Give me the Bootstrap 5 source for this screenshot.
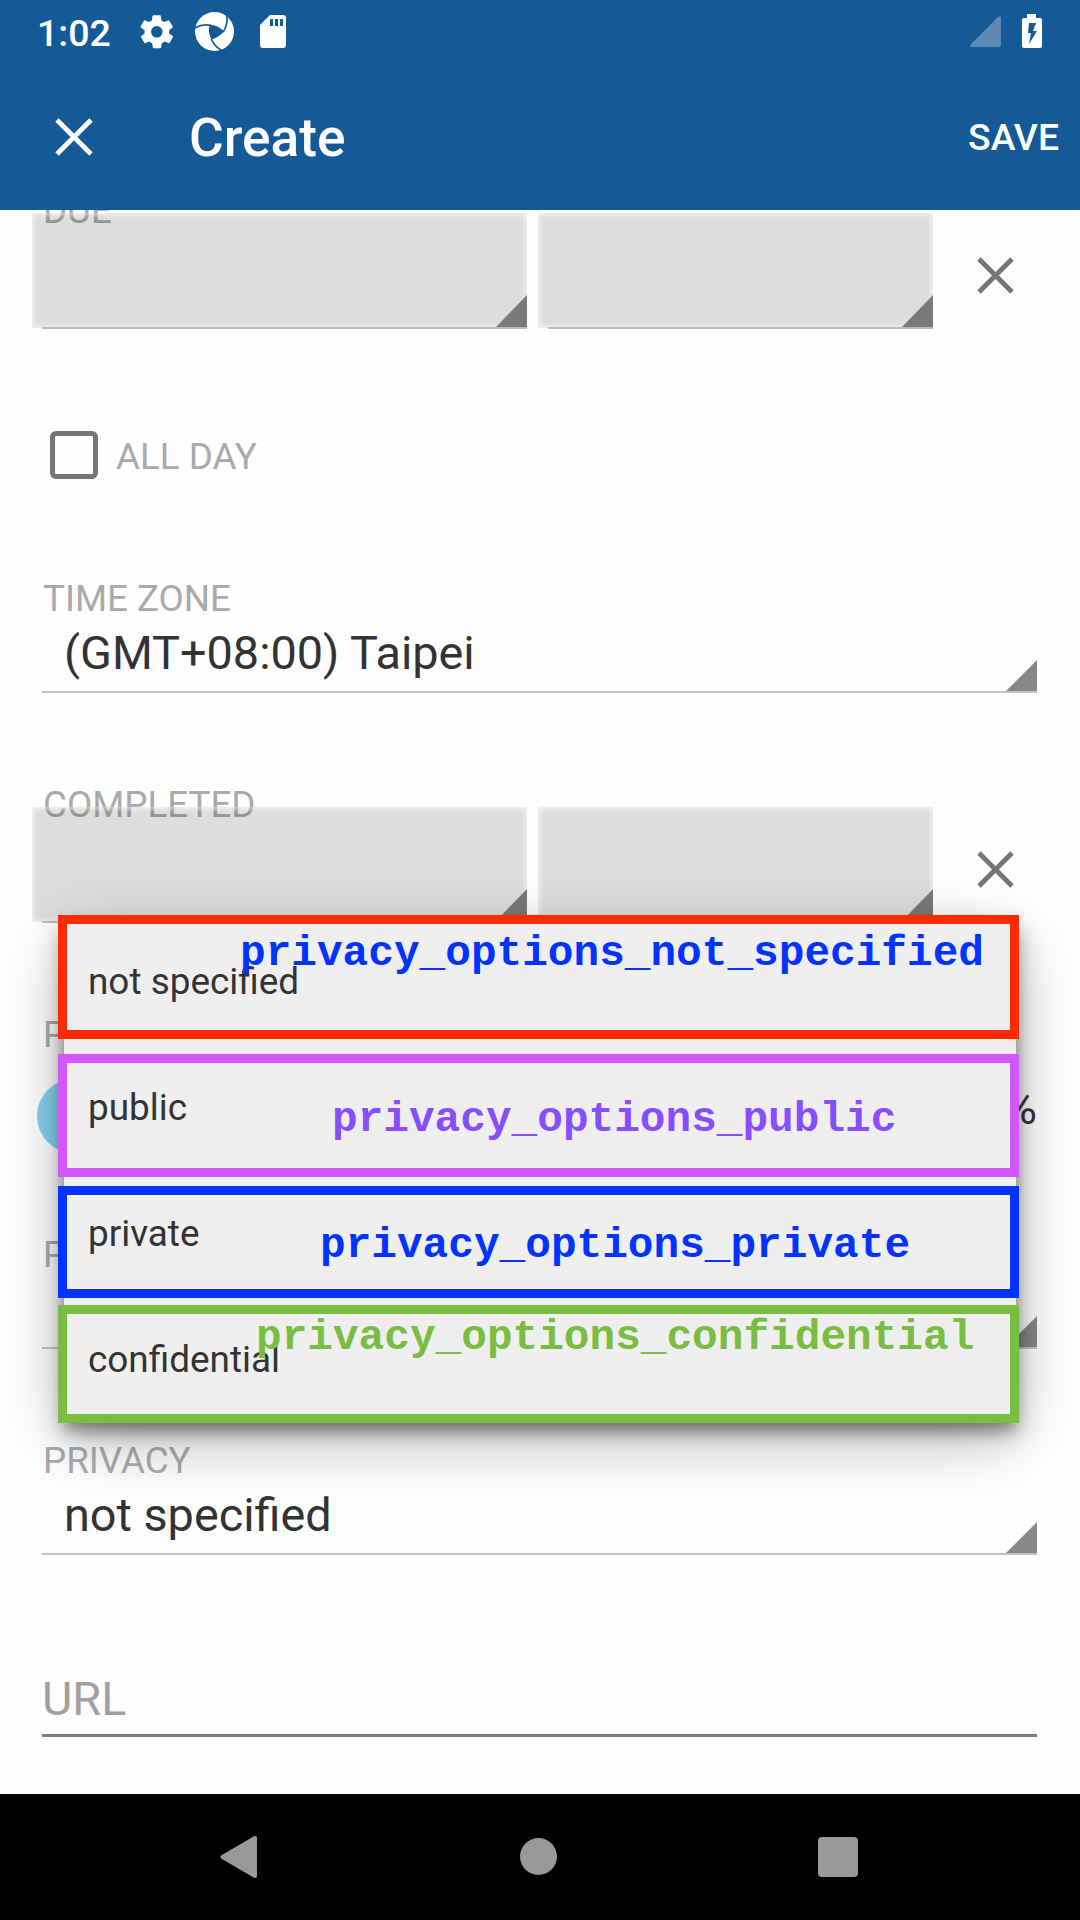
<!DOCTYPE html>
<html lang="en">
<head>
<meta charset="utf-8">
<meta name="viewport" content="width=device-width, initial-scale=1">
<title>Create</title>
<link href="https://cdn.jsdelivr.net/npm/bootstrap@5.3.0/dist/css/bootstrap.min.css" rel="stylesheet">
<style>
  body { font-family: Roboto, sans-serif; width: 1080px; height: 1920px; overflow: hidden; background: #fefefe; color: #333; }
  svg { display: block; flex: none; }
  .app-top { background: #145a96; height: 210px; flex: none; color: #fff; }
  .status-row { height: 63px; padding: 0 38px 0 37px; }
  .clock { font-size: 37.5px; font-weight: 500; line-height: 44px; width: 100px; padding-top: 3px; }
  .gear-icon { margin-top: 8px; }
  .swirl-icon { margin: 11px 0 0 18px; }
  .card-icon { margin: 15px 0 0 25px; }
  .signal-icon { margin-top: 16px; }
  .power-icon { margin: 14px 0 0 20px; }
  .title-row { height: 147px; padding: 0 21px 0 55px; }
  .title-text { font-size: 53.2px; font-weight: 500; line-height: 62px; margin-left: 96px; padding-top: 2px; }
  .save-text { font-size: 37.3px; font-weight: 500; line-height: 43px; color: #fff; margin-top: 2px; }
  .form-view { flex: 1 1 0; min-height: 0; overflow: hidden; position: relative; }
  .form-body { margin-top: -21px; padding: 0 43px 0 42px; }
  .field-label { font-size: 36.75px; line-height: 43px; color: #aaa; padding-left: 1px; }
  .spin { height: 73px; border-bottom: 2px solid #c4c4c4; position: relative; padding: 6px 0 0 22px; font-size: 46.8px; line-height: 55px; }
  .spin-field { height: 116px; }
  .corner::after { content: ""; position: absolute; right: 0; bottom: 0; width: 31px; height: 31px; background: #888; clip-path: polygon(100% 0, 100% 100%, 0 100%); }
  .date-field { height: 140px; }
  .date-row { margin: -19px 0 0 -10px; height: 116px; }
  .date-box { height: 116px; position: relative; }
  .date-box::before { content: ""; position: absolute; inset: 0 0 1px 0; background: rgba(0,0,0,.13); box-shadow: inset 0 0 5px 2px rgba(255,255,255,.65); }
  .date-box .date-line { position: absolute; left: 10px; right: 0; bottom: 0; height: 2px; background: #bbb; }
  .date-box.corner::after { background: #797979; bottom: 2px; height: 32px; }
  .date-wide { width: 495px; margin-right: 11px; }
  .date-slim { width: 395px; }
  .clear-x { margin: 44px 0 0 44px; }
  .tick-row { height: 48px; margin: 102px 0 98px 8px; }
  .tick-box { width: 48px; height: 48px; border: 5.5px solid #757575; border-radius: 6px; }
  .tick-text { font-size: 36.75px; line-height: 43px; color: #aaa; margin: 4px 0 0 18px; }
  .gap-a { margin-top: 90px; }
  .slide-row { height: 74px; margin: 23px 0 80px -5px; }
  .knob { width: 74px; height: 74px; background: #87d0ec; }
  .pct { font-size: 46.8px; line-height: 55px; padding-top: 2px; }
  .url-field { margin-top: 116px; height: 66px; border-bottom: 3px solid #7b7b7b; font-size: 46.8px; line-height: 55px; color: #a0a0a0; padding-top: 1px; }
  .option-menu { position: absolute; left: 64px; top: 918px; width: 952px; height: 501px; background: #efefef;
    box-shadow: 0 12px 18px rgba(0,0,0,.5), 0 20px 64px rgba(0,0,0,.26); }
  .option-line { height: 126px; padding: 42px 0 0 24px; font-size: 36.9px; line-height: 43px; }
  .frame-mark { position: absolute; left: 58px; width: 961px; border: 9px solid; font: 700 42.75px/48px "Liberation Mono", monospace; white-space: nowrap; }
  .m-red { top: 915px; height: 124px; border-color: #ff2a00; color: #0433ff; padding: 6px 0 0 173px; }
  .m-violet { top: 1053.5px; height: 123px; border-color: #d357fe; color: #874efe; padding: 33px 0 0 265px; }
  .m-blue { top: 1186px; height: 111.5px; border-color: #0433ff; color: #0433ff; padding: 27px 0 0 253px; }
  .m-green { top: 1304.5px; height: 118px; border-color: #79bd42; color: #79bd42; padding: 0 0 0 189px; }
  .nav-keys { height: 126px; flex: none; background: #000; padding: 0 222px 0 220px; }
  .home-key { margin: -1px 0 0 1px; }
</style>
</head>
<body class="d-flex flex-column position-relative">
<header class="app-top">
  <div class="status-row d-flex align-items-start">
    <div class="clock mt-2">1:02</div>
    <svg class="gear-icon" width="40" height="48" viewBox="0 0 40 48"><g transform="translate(0 4) scale(1.65)"><path fill="#fff" d="M19.4 13c0-.3.1-.6.1-1s0-.7-.1-1l2.100-1.600c.2-.2.3-.4.1-.6l-2-3.500c-.1-.2-.4-.3-.6-.2l-2.500 1c-.5-.4-1.100-.7-1.700-1l-.4-2.600c0-.2-.2-.5-.5-.5h-4c-.2 0-.4.2-.5.5l-.4 2.600c-.6.3-1.200.6-1.700 1l-2.500-1c-.2-.1-.5 0-.6.2l-2 3.500c-.1.200-.1.500.1.600L4.600 11c0 .3-.1.600-.1 1s0 .7.1 1l-2.100 1.600c-.2.2-.3.4-.1.600l2 3.500c.1.200.4.300.6.200l2.500-1c.5.4 1.100.7 1.700 1l.4 2.600c0 .2.200.5.5.5h4c.2 0 .5-.2.5-.5l.4-2.600c.6-.3 1.200-.6 1.700-1l2.500 1c.2.1.5 0 .6-.2l2-3.500c.1-.2.1-.5-.1-.6zM12 15.500a3.500 3.500 0 1 1 0-7 3.500 3.500 0 0 1 0 7z"/></g></svg>
    <svg class="swirl-icon" width="40" height="41" viewBox="0 0 40 41"><circle cx="19.500" cy="20.500" r="19.500" fill="#fff"/><path fill="#145a96" d="M14.500 13.700Q22.500 13.500 29 20.500Q23.500 26.500 16.500 28.500Q12.500 21 14.500 13.700z"/><path fill="none" stroke="#145a96" stroke-width="1.700" d="M0 17Q7 12.500 16 14.300M31.500 4Q33.500 13 28 21M16.300 28Q19.500 36 27 39.500"/></svg>
    <svg class="card-icon" width="26" height="34" viewBox="0 0 26 34"><path fill="#fff" d="M10 0H23Q26 0 26 3V30Q26 33 23 33H3Q0 33 0 30V10z"/><path fill="#145a96" d="M10 4h3v7h-3zM15 4h3v7h-3zM20 4h3v7h-3z"/></svg>
    <svg class="signal-icon ms-auto" width="32" height="32" viewBox="0 0 32 32"><path fill="#fff" fill-opacity=".3" d="M2 31Q-1 31 1 28L28 1Q31-1 31 2V29Q31 31 29 31z"/></svg>
    <svg class="power-icon" width="20" height="34" viewBox="0 0 20 34"><path fill="#fff" d="M5 0h9v4h4q2 0 2 2v26q0 2-2 2H2q-2 0-2-2V6q0-2 2-2h3z"/><path fill="#145a96" d="M7 9h7l-3 8h4L7 30l2-11H6z"/></svg>
  </div>
  <div class="title-row d-flex align-items-center">
    <svg width="38" height="38" viewBox="0 0 38 38"><path d="M2 2L36 36M36 2L2 36" stroke="#fff" stroke-width="4.800"/></svg>
    <div class="title-text">Create</div>
    <button class="btn border-0 p-0 ms-auto save-text">SAVE</button>
  </div>
</header>
<main class="form-view">
  <div class="form-body">
    <div class="date-field">
      <div class="field-label">DUE</div>
      <div class="date-row d-flex">
        <div class="date-box date-wide corner"><div class="date-line"></div></div>
        <div class="date-box date-slim corner"><div class="date-line"></div></div>
        <svg class="clear-x" width="37" height="37" viewBox="0 0 37 37"><path d="M2 2L35 35M35 2L2 35" stroke="#757575" stroke-width="4.800"/></svg>
      </div>
    </div>
    <div class="tick-row d-flex">
      <div class="tick-box"></div>
      <div class="tick-text">ALL DAY</div>
    </div>
    <div class="spin-field">
      <div class="field-label">TIME ZONE</div>
      <div class="spin corner">(GMT+08:00) Taipei</div>
    </div>
    <div class="date-field gap-a">
      <div class="field-label">COMPLETED</div>
      <div class="date-row d-flex">
        <div class="date-box date-wide corner"><div class="date-line"></div></div>
        <div class="date-box date-slim corner"><div class="date-line"></div></div>
        <svg class="clear-x" width="37" height="37" viewBox="0 0 37 37"><path d="M2 2L35 35M35 2L2 35" stroke="#757575" stroke-width="4.800"/></svg>
      </div>
    </div>
    <div class="field-label gap-a">PROGRESS</div>
    <div class="slide-row d-flex justify-content-between">
      <div class="knob rounded-circle"></div>
      <div class="pct">0%</div>
    </div>
    <div class="spin-field">
      <div class="field-label">PRIORITY</div>
      <div class="spin corner"></div>
    </div>
    <div class="spin-field gap-a">
      <div class="field-label">PRIVACY</div>
      <div class="spin corner">not specified</div>
    </div>
    <div class="url-field">URL</div>
  </div>
</main>
<nav class="nav-keys d-flex align-items-center justify-content-between">
  <svg width="38" height="44" viewBox="0 0 38 44"><path fill="#999" stroke="#999" stroke-width="4" stroke-linejoin="round" d="M2.500 22L35 3V41z"/></svg>
  <svg class="home-key" width="37" height="37" viewBox="0 0 37 37"><circle cx="18.500" cy="18.500" r="18.500" fill="#999"/></svg>
  <svg width="40" height="40" viewBox="0 0 40 40"><rect width="40" height="40" rx="4" fill="#999"/></svg>
</nav>
<div class="option-menu">
  <div class="option-line">not specified</div>
  <div class="option-line">public</div>
  <div class="option-line">private</div>
  <div class="option-line">confidential</div>
</div>
<div class="frame-mark m-red">privacy_options_not_specified</div>
<div class="frame-mark m-violet">privacy_options_public</div>
<div class="frame-mark m-blue">privacy_options_private</div>
<div class="frame-mark m-green">privacy_options_confidential</div>
<script src="https://cdn.jsdelivr.net/npm/bootstrap@5.3.0/dist/js/bootstrap.bundle.min.js"></script>
</body>
</html>
